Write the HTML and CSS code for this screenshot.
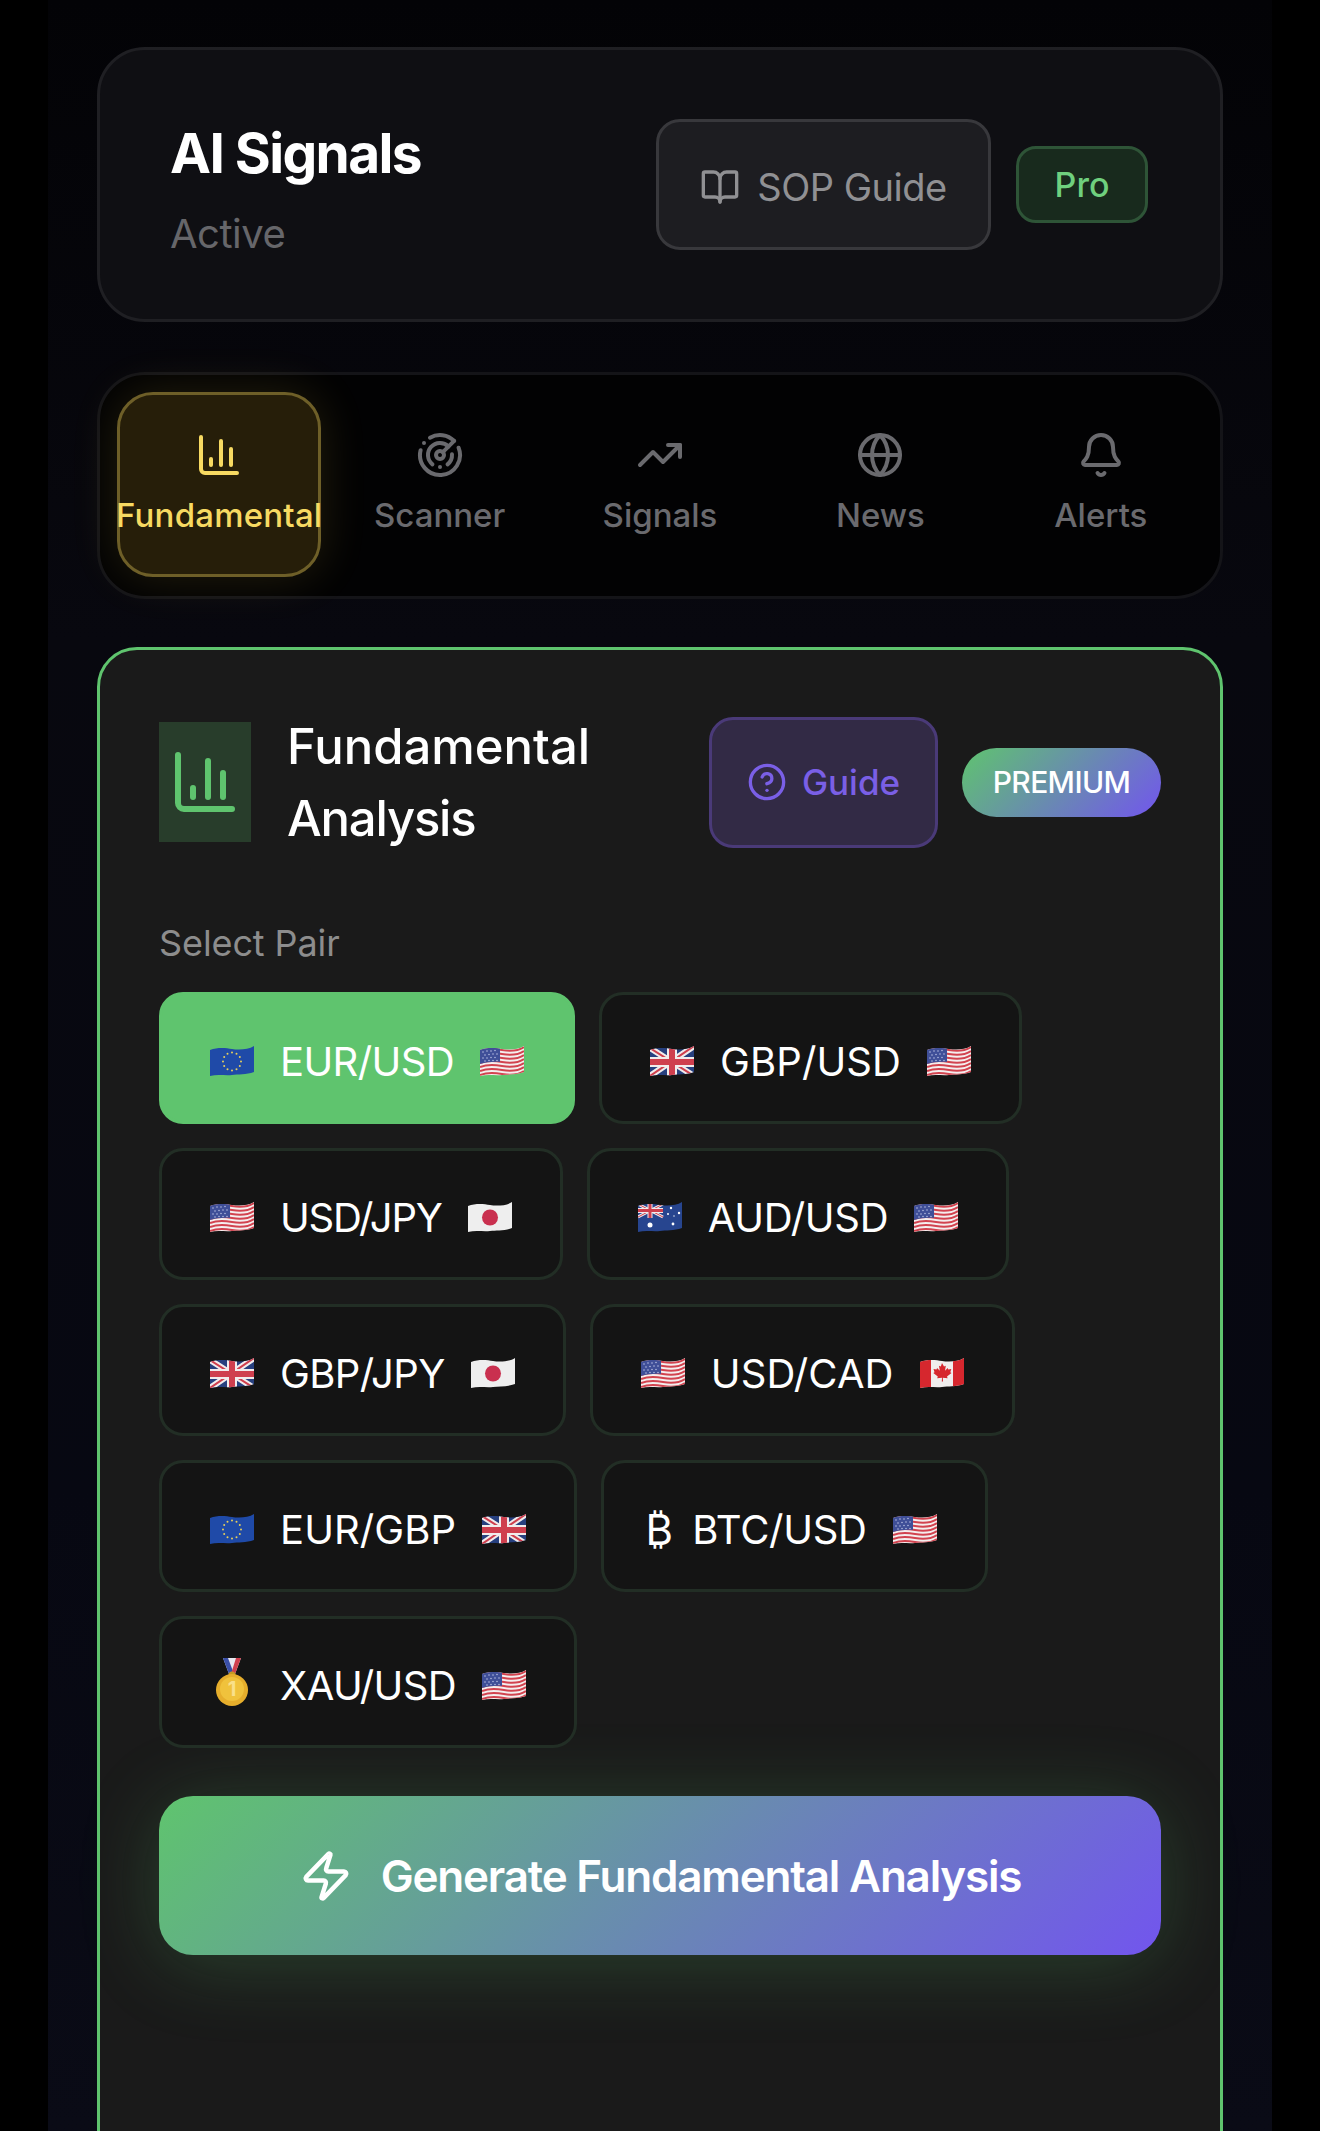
FILE: index.html
```html
<!DOCTYPE html>
<html lang="en">
<head>
<meta charset="utf-8">
<title>AI Signals</title>
<link rel="stylesheet" href="styles.css">
</head>
<body>
<svg class="sprites" width="0" height="0" aria-hidden="true">
  <defs>
    <clipPath id="wave"><path d="M0 5c8-3 16-2 22-1s16 1 22-3v26c-8 3-16 2-22 3s-14-1-22 1z"/></clipPath>
    <path id="st" d="M0 0c8-3 16-2 22-1s16 1 22-3" fill="none"/>
    <symbol id="f-us" viewBox="0 0 44 32">
      <g clip-path="url(#wave)">
        <rect width="44" height="32" fill="#f4eeee"/>
        <g stroke="#d2434f" stroke-width="2">
          <use href="#st" y="6"/><use href="#st" y="10"/><use href="#st" y="14"/><use href="#st" y="18"/>
          <use href="#st" y="22"/><use href="#st" y="26"/><use href="#st" y="30"/>
        </g>
        <path d="M0 3c6-2 13-3 20-2v16c-7-.5-14 .5-20 2z" fill="#3f4f98"/>
        <g fill="#c9d0ee">
          <circle cx="3" cy="7" r=".7"/><circle cx="7" cy="6" r=".7"/><circle cx="11" cy="6" r=".7"/><circle cx="15" cy="5.5" r=".7"/>
          <circle cx="5" cy="10" r=".7"/><circle cx="9" cy="9.500" r=".7"/><circle cx="13" cy="9" r=".7"/><circle cx="17" cy="9" r=".7"/>
          <circle cx="3" cy="13" r=".7"/><circle cx="7" cy="13" r=".7"/><circle cx="11" cy="12.500" r=".7"/><circle cx="15" cy="12.500" r=".7"/>
          <circle cx="5" cy="16" r=".7"/><circle cx="9" cy="15.500" r=".7"/><circle cx="13" cy="15.500" r=".7"/><circle cx="17" cy="15.500" r=".7"/>
        </g>
      </g>
    </symbol>
    <symbol id="f-eu" viewBox="0 0 44 32">
      <g clip-path="url(#wave)">
        <rect width="44" height="32" fill="#1f4aa8"/>
        <g fill="#e6cf5c">
          <circle cx="22" cy="7.500" r="1"/><circle cx="26.500" cy="8.700" r="1"/><circle cx="29.800" cy="12" r="1"/><circle cx="31" cy="16.500" r="1"/>
          <circle cx="29.800" cy="21" r="1"/><circle cx="26.500" cy="24.300" r="1"/><circle cx="22" cy="25.500" r="1"/><circle cx="17.500" cy="24.300" r="1"/>
          <circle cx="14.200" cy="21" r="1"/><circle cx="13" cy="16.500" r="1"/><circle cx="14.200" cy="12" r="1"/><circle cx="17.500" cy="8.700" r="1"/>
        </g>
      </g>
    </symbol>
    <symbol id="f-uk" viewBox="0 0 44 32">
      <g clip-path="url(#wave)">
        <rect width="44" height="32" fill="#27407f"/>
        <path d="M0 3 44 31M44 1 0 31" stroke="#f1ecec" stroke-width="6"/>
        <path d="M0 3 44 31M44 1 0 31" stroke="#cf3f4e" stroke-width="2"/>
        <path d="M22 0v32M0 17h44" stroke="#f1ecec" stroke-width="10"/>
        <path d="M22 0v32M0 17h44" stroke="#cf3f4e" stroke-width="6"/>
      </g>
    </symbol>
    <symbol id="f-jp" viewBox="0 0 44 32">
      <g clip-path="url(#wave)">
        <rect width="44" height="32" fill="#eeeeee"/>
        <circle cx="22" cy="16.500" r="8" fill="#c9304f"/>
      </g>
    </symbol>
    <symbol id="f-au" viewBox="0 0 44 32">
      <g clip-path="url(#wave)">
        <rect width="44" height="32" fill="#27458f"/>
        <path d="M0 3 25 16M25 3 0 16" stroke="#f1ecec" stroke-width="3"/>
        <path d="M0 3 25 16M25 3 0 16" stroke="#cf3f4e" stroke-width="1"/>
        <path d="M12 0v17M0 9.500h25" stroke="#f1ecec" stroke-width="5"/>
        <path d="M12 0v17M0 9.500h25" stroke="#cf3f4e" stroke-width="3"/>
        <g fill="#fff">
          <circle cx="12" cy="24" r="2.500"/><circle cx="33" cy="7" r="1.200"/><circle cx="30" cy="13" r="1"/>
          <circle cx="41" cy="12" r="1.200"/><circle cx="36" cy="15" r=".7"/><circle cx="35" cy="23" r="1.400"/>
        </g>
      </g>
    </symbol>
    <symbol id="f-ca" viewBox="0 0 44 32">
      <g clip-path="url(#wave)">
        <rect width="44" height="32" fill="#f0eeee"/>
        <rect width="11" height="32" fill="#d6272e"/>
        <rect x="33" width="11" height="32" fill="#d6272e"/>
        <path d="M22 6l2 3.500 1.800-.8-.8 5 2.700-2.800.6 1.600 3-.5-1 3.200 1.200.8-4.500 3.500.6 1.800-4.800-.6.200 3.800h-1.200l.2-3.800-4.800.6.600-1.800-4.500-3.500 1.200-.8-1-3.200 3 .5.600-1.600 2.700 2.800-.8-5 1.800.8z" fill="#d6272e"/>
      </g>
    </symbol>
    <symbol id="f-medal" viewBox="0 0 44 48">
      <path d="M13 0h18l-6 16h-6z" fill="#e8e8f0"/>
      <path d="M13 0h5l6 16h-5z" fill="#3a4fa8"/>
      <path d="M31 0h-5l-5 16h4z" fill="#cf3f4e"/>
      <circle cx="22" cy="17" r="3.500" fill="#c79a22"/>
      <circle cx="22" cy="32" r="16" fill="#e6ae2c"/>
      <circle cx="22" cy="31" r="12" fill="#f0c23c"/>
      <text x="22" y="38" text-anchor="middle" class="medal-num">1</text>
    </symbol>
  </defs>
</svg>

<div class="page">
  <header class="top">
    <div class="top-left">
      <h1>AI Signals</h1>
      <p>Active</p>
    </div>
    <div class="top-right">
      <button class="sop">
        <svg class="ico ico-40" viewBox="0 0 24 24"><path d="M12 7v14"/><path d="M3 18a1 1 0 0 1-1-1V4a1 1 0 0 1 1-1h5a4 4 0 0 1 4 4 4 4 0 0 1 4-4h5a1 1 0 0 1 1 1v13a1 1 0 0 1-1 1h-6a3 3 0 0 0-3 3 3 3 0 0 0-3-3z"/></svg>
        SOP Guide
      </button>
      <span class="pro">Pro</span>
    </div>
  </header>

  <nav class="tabs">
    <a class="tab active">
      <svg class="ico ico-48" viewBox="0 0 24 24"><path d="M3 3v16a2 2 0 0 0 2 2h16"/><path d="M18 17V9"/><path d="M13 17V5"/><path d="M8 17v-3"/></svg>
      <span>Fundamental</span>
    </a>
    <a class="tab">
      <svg class="ico ico-48" viewBox="0 0 24 24"><path d="M19.070 4.930A10 10 0 0 0 6.990 3.340"/><path d="M4 6h.01"/><path d="M2.290 9.620A10 10 0 1 0 21.310 8.350"/><path d="M16.240 7.760A6 6 0 1 0 8.230 16.670"/><path d="M12 18h.01"/><path d="M17.990 11.660A6 6 0 0 1 15.770 16.670"/><circle cx="12" cy="12" r="2"/><path d="m13.410 10.590 5.660-5.660"/></svg>
      <span>Scanner</span>
    </a>
    <a class="tab">
      <svg class="ico ico-48" viewBox="0 0 24 24"><path d="M22 7 13.500 15.500 8.500 10.500 2 17"/><path d="M16 7h6v6"/></svg>
      <span>Signals</span>
    </a>
    <a class="tab">
      <svg class="ico ico-48" viewBox="0 0 24 24"><circle cx="12" cy="12" r="10"/><path d="M12 2a14.500 14.500 0 0 0 0 20 14.500 14.500 0 0 0 0-20"/><path d="M2 12h20"/></svg>
      <span>News</span>
    </a>
    <a class="tab">
      <svg class="ico ico-48" viewBox="0 0 24 24"><path d="M10.268 21a2 2 0 0 0 3.464 0"/><path d="M3.262 15.326A1 1 0 0 0 4 17h16a1 1 0 0 0 .74-1.673C19.410 13.956 18 12.499 18 8A6 6 0 0 0 6 8c0 4.499-1.411 5.956-2.738 7.326"/></svg>
      <span>Alerts</span>
    </a>
  </nav>

  <section class="card">
    <div class="card-head">
      <div class="tile">
        <svg class="ico ico-72" viewBox="0 0 24 24"><path d="M3 3v16a2 2 0 0 0 2 2h16"/><path d="M18 17V9"/><path d="M13 17V5"/><path d="M8 17v-3"/></svg>
      </div>
      <h2><span class="line-a">Fundamental</span><br><span class="line-b">Analysis</span></h2>
      <button class="guide">
        <svg class="ico ico-40" viewBox="0 0 24 24"><circle cx="12" cy="12" r="10"/><path d="M9.090 9a3 3 0 0 1 5.830 1c0 2-3 3-3 3"/><path d="M12 17h.01"/></svg>
        Guide
      </button>
      <span class="premium">PREMIUM</span>
    </div>

    <div class="label">Select Pair</div>
    <div class="pairs">
      <button class="pair on"><svg class="flag"><use href="#f-eu"/></svg><span>EUR/USD</span><svg class="flag"><use href="#f-us"/></svg></button>
      <button class="pair t-wide"><svg class="flag"><use href="#f-uk"/></svg><span>GBP/USD</span><svg class="flag"><use href="#f-us"/></svg></button>
      <button class="pair t-tight"><svg class="flag"><use href="#f-us"/></svg><span>USD/JPY</span><svg class="flag"><use href="#f-jp"/></svg></button>
      <button class="pair t-mid"><svg class="flag"><use href="#f-au"/></svg><span>AUD/USD</span><svg class="flag"><use href="#f-us"/></svg></button>
      <button class="pair"><svg class="flag"><use href="#f-uk"/></svg><span>GBP/JPY</span><svg class="flag"><use href="#f-jp"/></svg></button>
      <button class="pair t-wide"><svg class="flag"><use href="#f-us"/></svg><span>USD/CAD</span><svg class="flag"><use href="#f-ca"/></svg></button>
      <button class="pair t-wide"><svg class="flag"><use href="#f-eu"/></svg><span>EUR/GBP</span><svg class="flag"><use href="#f-uk"/></svg></button>
      <button class="pair t-mid"><b class="coin">₿</b><span>BTC/USD</span><svg class="flag"><use href="#f-us"/></svg></button>
      <button class="pair"><svg class="flag medal"><use href="#f-medal"/></svg><span>XAU/USD</span><svg class="flag"><use href="#f-us"/></svg></button>
    </div>

    <button class="generate">
      <svg class="ico ico-54" viewBox="0 0 24 24"><path d="M4 14a1 1 0 0 1-.78-1.630l9.900-10.200a.5.5 0 0 1 .86.46l-1.920 6.020A1 1 0 0 0 13 10h7a1 1 0 0 1 .78 1.630l-9.900 10.200a.5.5 0 0 1-.86-.46l1.920-6.020A1 1 0 0 0 11 14z"/></svg>
      Generate Fundamental Analysis
    </button>
  </section>
</div>
</body>
</html>
```
FILE: styles.css
```css
*{ margin:0; padding:0; box-sizing:border-box; }
html,body{ height:100%; }
body{
  background:#000;
  font-family:Inter,"Noto Sans",sans-serif;
  color:#fff;
  overflow:hidden;
}
button{ font:inherit; color:inherit; cursor:pointer; }
.sprites{ position:absolute; }
.medal-num{ font:700 20px Inter,sans-serif; fill:#f9e08a; }

.ico{ fill:none; stroke:currentColor; stroke-width:2; stroke-linecap:round; stroke-linejoin:round; flex:none; }
.ico-40{ width:40px; height:40px; }
.ico-48{ width:48px; height:48px; }
.ico-54{ width:54px; height:54px; }
.ico-72{ width:72px; height:72px; }

.page{
  width:1224px;
  height:2131px;
  margin:0 auto;
  padding:47px 49px 0;
  overflow:hidden;
  background:linear-gradient(180deg,#030306 0%,#08080f 30%,#070812 70%,#0a0b16 100%);
}

/* top header */
.top{
  height:275px;
  padding:0 72px 0 70px;
  display:flex;
  align-items:center;
  justify-content:space-between;
  background:#0f0f13;
  border:3px solid #1f1f23;
  border-radius:48px;
}
.top-left{ padding-top:9px; }
.top h1{ font-size:55px; line-height:76px; font-weight:700; letter-spacing:-1.6px; }
.top p{ font-size:40px; line-height:60px; margin-top:13px; color:#66666a; letter-spacing:-.5px; }
.top-right{ display:flex; align-items:center; gap:25px; }
.sop{
  width:335px;
  height:131px;
  padding-top:4px;
  display:flex;
  align-items:center;
  justify-content:center;
  gap:17px;
  font-size:38px;
  color:#909093;
  letter-spacing:-.5px;
  background:#1d1d21;
  border:3px solid #38383c;
  border-radius:24px;
}
.pro{
  width:132px;
  height:77px;
  display:flex;
  align-items:center;
  justify-content:center;
  font-size:34px;
  font-weight:500;
  color:#6fd07e;
  background:#182a1d;
  border:3px solid #2e5437;
  border-radius:20px;
}

/* tab bar */
.tabs{
  height:227px;
  margin-top:50px;
  padding:17px 17px 19px;
  display:grid;
  grid-template-columns:repeat(5,1fr);
  gap:16px;
  background:#020203;
  border:3px solid #141418;
  border-radius:48px;
}
.tab{
  min-width:0;
  display:flex;
  flex-direction:column;
  align-items:center;
  padding-top:36px;
  gap:12px;
  color:#6a6a6e;
  border:3px solid transparent;
  border-radius:36px;
  white-space:nowrap;
}
.tab span{ font-size:33px; line-height:48px; font-weight:500; }
.tab.active{
  color:#f7da62;
  background:#261e09;
  border-color:#6e5f28;
  box-shadow:0 0 48px rgba(250,210,80,.14);
}
.tab.active span{ letter-spacing:.2px; }

/* main card */
.card{
  margin-top:48px;
  padding:60px 59px 240px;
  background:#1a1a1a;
  border:3px solid #5fc46e;
  border-radius:40px;
}
.card-head{ display:flex; align-items:center; height:144px; }
.tile{
  width:92px;
  height:120px;
  flex:none;
  display:flex;
  align-items:center;
  justify-content:center;
  color:#5fc46e;
  background:#283d2b;
}
.card-head h2{
  flex:1;
  margin-left:36px;
  padding-top:2px;
  font-size:49px;
  line-height:72px;
  font-weight:500;
}
.line-a{ letter-spacing:0; }
.line-b{ letter-spacing:-1.2px; }
.guide{
  width:229px;
  height:131px;
  display:flex;
  align-items:center;
  justify-content:center;
  gap:15px;
  font-size:35px;
  font-weight:500;
  color:#7a5fe6;
  background:#322a45;
  border:3px solid #4a3a78;
  border-radius:24px;
}
.premium{
  width:199px;
  height:69px;
  margin-left:24px;
  display:flex;
  align-items:center;
  justify-content:center;
  font-size:30px;
  font-weight:500;
  letter-spacing:-.6px;
  border-radius:35px;
  background:linear-gradient(135deg,#5fc46e,#7255ee);
}
.label{ margin-top:65px; margin-bottom:25px; font-size:36px; line-height:48px; color:#8d8d8d; letter-spacing:-.1px; }

.pairs{ display:flex; flex-wrap:wrap; gap:24px; }
.pair{
  height:132px;
  padding:0 48px;
  display:flex;
  align-items:center;
  gap:26px;
  font-size:40px;
  background:#141414;
  border:3px solid #222e25;
  border-radius:24px;
}
.pair.on{ background:#5fc46e; border-color:#5fc46e; }
.pair span{ margin-top:8px; letter-spacing:-.6px; line-height:56px; }
.pair.t-tight span{ letter-spacing:-1.2px; }
.pair.t-mid span{ letter-spacing:-.3px; }
.pair.t-wide span{ letter-spacing:.1px; }
.flag{ width:44px; height:32px; flex:none; margin-top:6px; }
.medal{ height:48px; margin-top:0; }
.coin{ width:14px; margin-top:6px; display:flex; justify-content:center; font-weight:400; font-size:42px; }

.generate{
  width:100%;
  height:159px;
  margin-top:48px;
  display:flex;
  align-items:center;
  justify-content:center;
  gap:28px;
  font-size:44px;
  font-weight:600;
  letter-spacing:-1.2px;
  border:0;
  border-radius:34px;
  background:linear-gradient(135deg,#5fc46e,#7255ee);
  box-shadow:0 8px 80px rgba(95,196,110,.24);
}
```
